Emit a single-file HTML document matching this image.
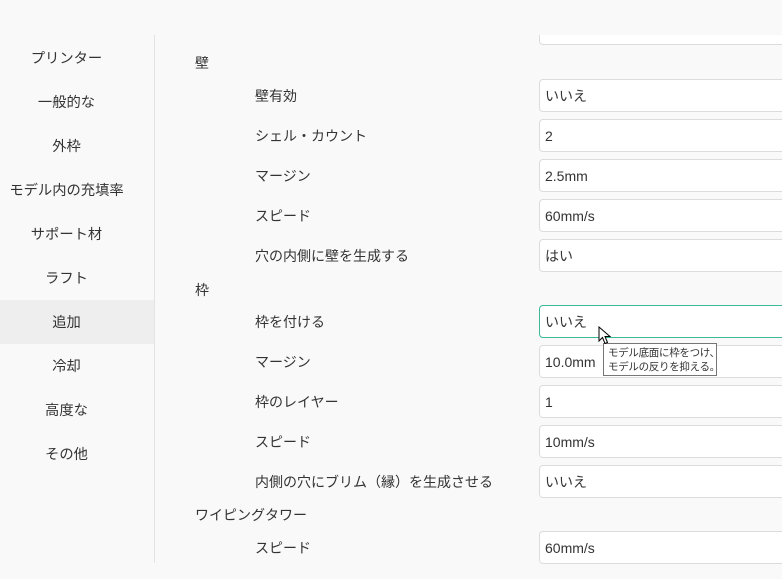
<!DOCTYPE html>
<html><head><meta charset="utf-8"><style>
html,body{margin:0;padding:0;width:782px;height:579px;overflow:hidden;background:#f9f9f9;font-family:"Liberation Sans","Noto Sans CJK JP",sans-serif;color:#333;}
.a{position:absolute;white-space:nowrap;font-size:14px;line-height:20px}
.nav{position:absolute;left:0;width:133px;text-align:center;font-size:14.3px;line-height:20px}
.sel{position:absolute;left:0;top:300px;width:154px;height:44px;background:#eeeeef}
.div{position:absolute;left:154px;top:35px;width:1px;height:528px;background:#e2e2e2}
.in{position:absolute;left:539px;width:260px;height:31px;background:#fff;border:1px solid #dcdcdc;border-radius:4px;box-sizing:content-box;font-size:14px;line-height:32px;padding-left:5px}
</style></head><body>
<div class="sel"></div>
<div class="div"></div>
<div class="nav" style="top:49px">プリンター</div>
<div class="nav" style="top:93px">一般的な</div>
<div class="nav" style="top:137px">外枠</div>
<div class="nav" style="top:181px">モデル内の充填率</div>
<div class="nav" style="top:225px">サポート材</div>
<div class="nav" style="top:269px">ラフト</div>
<div class="nav" style="top:313px">追加</div>
<div class="nav" style="top:357px">冷却</div>
<div class="nav" style="top:401px">高度な</div>
<div class="nav" style="top:445px">その他</div>
<div class="in" style="top:12px;clip-path:inset(23px 0 0 0)"></div>
<div class="a" style="left:195px;top:53px">壁</div>
<div class="a" style="left:255px;top:86px">壁有効</div>
<div class="a" style="left:255px;top:126px">シェル・カウント</div>
<div class="a" style="left:255px;top:166px">マージン</div>
<div class="a" style="left:255px;top:206px">スピード</div>
<div class="a" style="left:255px;top:246px">穴の内側に壁を生成する</div>
<div class="a" style="left:195px;top:280px">枠</div>
<div class="a" style="left:255px;top:312px">枠を付ける</div>
<div class="a" style="left:255px;top:352px">マージン</div>
<div class="a" style="left:255px;top:392px">枠のレイヤー</div>
<div class="a" style="left:255px;top:432px">スピード</div>
<div class="a" style="left:255px;top:472px">内側の穴にブリム（縁）を生成させる</div>
<div class="a" style="left:195px;top:505px">ワイピングタワー</div>
<div class="a" style="left:255px;top:538px">スピード</div>
<div class="in" style="top:79px">いいえ</div>
<div class="in" style="top:119px">2</div>
<div class="in" style="top:159px">2.5mm</div>
<div class="in" style="top:199px">60mm/s</div>
<div class="in" style="top:239px">はい</div>
<div class="in" style="top:305px;border-color:#3db89a">いいえ</div>
<div class="in" style="top:345px">10.0mm</div>
<div class="in" style="top:385px">1</div>
<div class="in" style="top:425px">10mm/s</div>
<div class="in" style="top:465px">いいえ</div>
<div class="in" style="top:531px">60mm/s</div>
<div style="position:absolute;left:603px;top:343px;width:114px;height:33px;background:#fff;border:1px solid #767676;font-size:10.5px;line-height:14px;padding:2px 0 0 4px;box-sizing:border-box;white-space:nowrap;letter-spacing:-0.3px">モデル底面に枠をつけ、<br>モデルの反りを抑える。</div>
<svg style="position:absolute;left:598px;top:326px" width="14" height="20" viewBox="0 0 14 20"><path d="M1 1 L1 15 L4.5 11.5 L7 17.5 L9.5 16.5 L7 10.5 L12 10.5 Z" fill="#fff" stroke="#000" stroke-width="1"/></svg>
</body></html>
